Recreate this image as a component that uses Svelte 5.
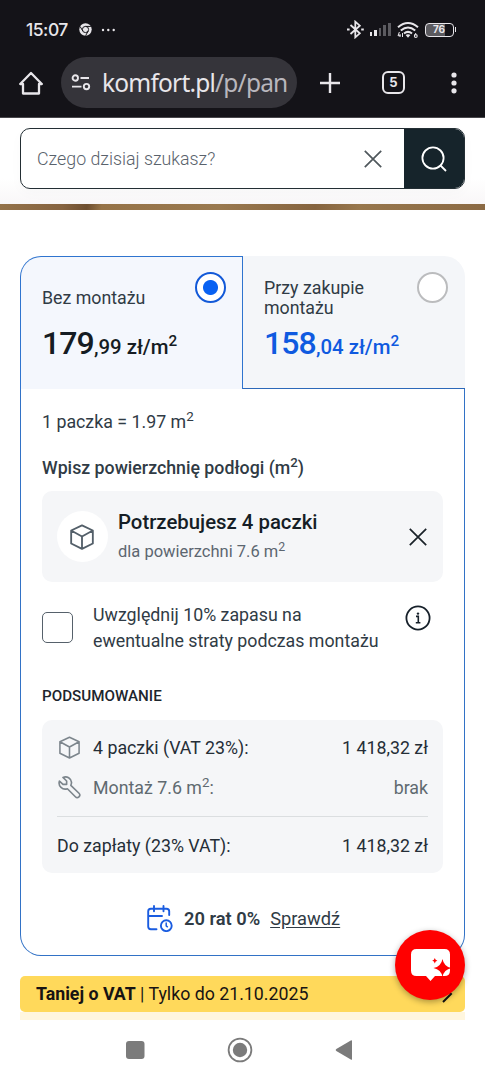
<script>
	const offers = [
		{ label: 'Bez montażu', whole: '179', rest: ',99 zł/m', active: true },
		{ label: 'Przy zakupie montażu', whole: '158', rest: ',04 zł/m', active: false }
	];
	const signal = [4, 6, 8, 11, 13];
</script>

{#snippet box(size)}
	<svg class="box-icon" width={size} height={size} viewBox="0 0 24 24">
		<path d="M12 1.3 22 6v12l-10 5L2 18V6z M2 6l10 5.5L22 6 M12 11.5V23" />
	</svg>
{/snippet}

{#snippet cross()}
	<svg class="cross" width="20" height="20" viewBox="0 0 20 20">
		<path d="M1.8 1.8 18.2 18.2M18.2 1.8 1.8 18.2" />
	</svg>
{/snippet}

<div class="screen">
	<header class="phone">
		<div class="status">
			<span class="clock">15:07</span>
			<svg class="chrome" width="13" height="13" viewBox="0 0 13 13">
				<circle cx="6.5" cy="6.5" r="6.2" fill="#e8e6ea" />
				<circle cx="6.5" cy="6.5" r="3.1" fill="#e8e6ea" stroke="#141318" stroke-width="1" />
				<path d="M6.5 3.4h5.4M3.8 8 1.1 3.5M9.2 8l-2.6 4.7" stroke="#141318" stroke-width="1" />
			</svg>
			<svg class="more" width="15" height="4" viewBox="0 0 15 4" fill="#e8e6ea">
				<circle cx="2" cy="2" r="1.2" /><circle cx="7.3" cy="2" r="1.2" /><circle cx="12.7" cy="2" r="1.2" />
			</svg>
			<div class="indicators">
				<svg width="17" height="19" viewBox="0 0 17 19" fill="none" stroke="#e8e6ea" stroke-width="1.8">
					<path d="m3.5 5 9.3 8.3-4.5 4V1.7l4.5 4L3.5 14" />
					<path d="M0 9.5h2.6M14.2 9.5h2.6" stroke-width="2.2" />
				</svg>
				<div class="signal">
					{#each signal as height, i}
						<i class:on={i < 2} style="height: {height}px"></i>
					{/each}
				</div>
				<svg class="wifi" width="22" height="18" viewBox="0 0 22 18" fill="none" stroke="#e8e6ea" stroke-width="2">
					<path d="M1 6.2Q11-2.2 21 6.2M3.8 9.5Q11 3.5 18.2 9.5M7 12.5q4-3.2 8 0" />
					<path d="m8.6 14 2.4 2.8 2.4-2.8q-2.4-1.6-4.8 0z" fill="#e8e6ea" stroke="none" />
					<path d="M2.4 11 1 14.7h2.6M3 13v3M5.5 16v-4M19 12q-1.6 2-1.6 3" stroke-width="1" />
					<circle cx="18.8" cy="15" r="1.4" stroke-width="1.1" />
				</svg>
				<div class="battery"><span>76</span></div>
			</div>
		</div>
		<div class="toolbar">
			<svg class="home" width="24" height="24" viewBox="0 0 24 24" fill="none" stroke="#e8e6ea" stroke-width="2.3" stroke-linejoin="round">
				<path d="M1.2 13 12 2l10.8 11H20v9.5H4V13z" />
			</svg>
			<div class="address">
				<svg width="20" height="17" viewBox="0 0 20 17" fill="none" stroke="#e8e6ea" stroke-width="1.9">
					<circle cx="4.3" cy="4" r="2.7" /><circle cx="15.5" cy="12.6" r="2.7" />
					<path d="M9.5 4H18M1 12.6h9.5" />
				</svg>
				<span>komfort.pl<em>/p/pan</em></span>
			</div>
			<svg class="plus" width="22" height="22" viewBox="0 0 22 22" stroke="#e8e6ea" stroke-width="2.4">
				<path d="M11 1v20M1 11h20" />
			</svg>
			<div class="tab-count">5</div>
			<svg class="kebab" width="6" height="22" viewBox="0 0 6 22" fill="#e8e6ea">
				<circle cx="3" cy="3" r="2.6" /><circle cx="3" cy="11" r="2.6" /><circle cx="3" cy="18.8" r="2.6" />
			</svg>
		</div>
	</header>

	<div class="search">
		<div class="search-field">
			<span>Czego dzisiaj szukasz?</span>
			{@render cross()}
			<button aria-label="Szukaj">
				<svg width="26" height="26" viewBox="0 0 26 26" fill="none" stroke="#fff" stroke-width="1.8">
					<circle cx="12" cy="12" r="10.6" /><path d="m19 19 6 6" />
				</svg>
			</button>
		</div>
	</div>
	<div class="floor"></div>

	<main>
		<section class="card">
			<div class="offers">
				{#each offers as offer}
					<div class="offer" class:active={offer.active}>
						<div class="offer-label">{offer.label}</div>
						<div class="price"><b>{offer.whole}</b>{offer.rest}<sup>2</sup></div>
						<span class="radio"></span>
					</div>
				{/each}
			</div>
			<div class="details">
				<div class="pack">1 paczka = 1.97 m<sup>2</sup></div>
				<div class="area-title">Wpisz powierzchnię podłogi (m<sup>2</sup>)</div>
				<div class="need">
					<div class="bubble">{@render box(26)}</div>
					<div class="need-text">
						<strong>Potrzebujesz 4 paczki</strong>
						<span>dla powierzchni 7.6 m<sup>2</sup></span>
					</div>
					{@render cross()}
				</div>
				<div class="reserve">
					<span class="checkbox"></span>
					<p>Uwzględnij 10% zapasu na<br />ewentualne straty podczas montażu</p>
					<svg width="26" height="26" viewBox="0 0 26 26" fill="none" stroke="#16202a" stroke-width="1.8">
						<circle cx="13" cy="13" r="11.6" />
						<path d="M11 11.4h2.3v6M10.8 17.7h4.6" stroke-width="1.6" />
						<circle cx="13" cy="8.6" r="1.2" fill="#16202a" stroke="none" />
					</svg>
				</div>
				<h2>PODSUMOWANIE</h2>
				<div class="summary">
					<div class="row">
						{@render box(23)}
						<span>4 paczki (VAT 23%):</span>
						<span class="amount">1 418,32 zł</span>
					</div>
					<div class="row muted">
						<svg width="23" height="23" viewBox="0 0 24 24" fill="none" stroke="#7c858c" stroke-width="1.7" stroke-linejoin="round">
							<path d="M11.1 1.8A6.3 6.3 0 0 0 5.2 1.5L9 5.2v3.6H5.2L1.5 5.3a6.4 6.4 0 0 0 8.3 8l8.3 8.4a2.6 2.6 0 0 0 3.8-3.7l-8.5-8.3a6.4 6.4 0 0 0-2.3-7.9z" />
						</svg>
						<span>Montaż 7.6 m<sup>2</sup>:</span>
						<span class="amount">brak</span>
					</div>
					<div class="row total">
						<span>Do zapłaty (23% VAT):</span>
						<span class="amount">1 418,32 zł</span>
					</div>
				</div>
				<div class="instalments">
					<svg width="26" height="27" viewBox="0 0 26 27" fill="none" stroke="#1a5ce0" stroke-width="1.9" stroke-linecap="round">
						<path d="M9.5 24.2H3.8Q1.2 24.2 1.2 21.5V6.3q0-2.6 2.6-2.6h15.7q2.7 0 2.7 2.6V10M1.2 11H15M7 1v5.3M16.5 1v5.3" />
						<circle cx="19.3" cy="20.7" r="5.4" />
						<path d="M19.2 18v2.8l1.2 1" stroke-width="1.5" />
					</svg>
					<b>20 rat 0%</b>
					<u>Sprawdź</u>
				</div>
			</div>
		</section>
		<div class="promo">
			<span><b>Taniej o VAT</b> | Tylko do 21.10.2025</span>
			<svg width="12" height="18" viewBox="0 0 12 18" fill="none" stroke="#111" stroke-width="2">
				<path d="m2 1 8 8-8 8" />
			</svg>
		</div>
		<div class="promo-next"></div>
	</main>

	<nav>
		<svg width="20" height="20" viewBox="0 0 20 20"><rect x="1" y="1" width="18.5" height="18" rx="3" fill="#7b7b7b" /></svg>
		<svg width="26" height="26" viewBox="0 0 26 26">
			<circle cx="13" cy="13" r="11.4" fill="none" stroke="#7b7b7b" stroke-width="1.8" />
			<circle cx="13" cy="13" r="7.2" fill="#7b7b7b" />
		</svg>
		<svg width="18" height="22" viewBox="0 0 18 22"><path d="M17 2v18q0 1.3-1.2.6L1.3 12q-1.3-1 0-2L15.8 1.4Q17 .7 17 2z" fill="#7b7b7b" /></svg>
	</nav>

	<button class="chat" aria-label="Czat">
		<svg width="42" height="34" viewBox="0 0 42 34">
			<path d="M6.5 1h28q5.5 0 5.5 5.5v16q0 5.5-5.5 5.5H25l-4.5 5-4.5-5H6.5Q1 28 1 22.5v-16Q1 1 6.5 1z" fill="#fff" />
			<path d="M32.5 11q1.3 7.5 9 9-7.7 1.5-9 9-1.3-7.5-9-9 7.7-1.5 9-9z" fill="#f00" />
			<path d="M24.8 10q.4 2.3 2.6 2.7-2.2.4-2.6 2.7-.4-2.3-2.6-2.7 2.2-.4 2.6-2.7z" fill="#f00" />
		</svg>
	</button>
</div>

<style>
	:global(body) {
		background: #fff;
	}

	.screen {
		position: relative;
		display: flex;
		flex-direction: column;
		width: 485px;
		height: 1080px;
		overflow: hidden;
		box-sizing: border-box;
		font-family: Roboto, 'Liberation Sans', sans-serif;
		font-size: 17.8px;
		color: #303b45;
		white-space: nowrap;
	}

	.screen :global(*) {
		box-sizing: border-box;
	}

	svg {
		display: block;
		flex: none;
	}

	button {
		padding: 0;
		border: 0;
	}

	sup {
		font-size: 75%;
		line-height: 0;
		vertical-align: 0.52em;
	}

	.phone {
		height: 118px;
		background: #141318;
		border-bottom: 1px solid #48474b;
		color: #e8e6ea;
	}

	.status {
		display: flex;
		align-items: center;
		height: 57px;
		padding: 2px 29.5px 0 26px;
	}

	.clock {
		width: 53px;
		font: 500 17.5px Inter, sans-serif;
		letter-spacing: -0.5px;
	}

	.more {
		margin-left: 9px;
	}

	.indicators {
		display: flex;
		align-items: center;
		margin-left: auto;
	}

	.signal {
		display: flex;
		align-items: flex-end;
		gap: 2px;
		height: 13px;
		margin: 0 6px;
	}

	.signal i {
		width: 2.6px;
		background: #5c5b60;
	}

	.signal i.on {
		background: #e8e6ea;
	}

	.battery {
		position: relative;
		width: 29px;
		height: 14px;
		margin: 0 2px 0 6px;
		border: 1.5px solid #e8e6ea;
		border-radius: 4px;
		background: linear-gradient(90deg, #5b5a5f 72%, #141318 72%);
		font: 700 10px/11px Inter, sans-serif;
		text-align: center;
	}

	.battery::after {
		content: '';
		position: absolute;
		right: -3.5px;
		top: 3px;
		width: 1.5px;
		height: 5px;
		background: #e8e6ea;
	}

	.toolbar {
		display: flex;
		align-items: center;
		height: 51px;
		padding: 0 28px 0 19px;
	}

	.address {
		display: flex;
		align-items: center;
		gap: 11px;
		width: 236px;
		height: 51px;
		margin-left: 18px;
		padding-left: 10px;
		border-radius: 26px;
		background: #35343a;
		font: 400 24.5px 'Noto Sans', sans-serif;
	}

	.address span {
		letter-spacing: -0.8px;
	}

	.address em {
		font-style: normal;
		color: #b9b7bd;
	}

	.plus {
		margin-left: 22px;
	}

	.tab-count {
		width: 23px;
		height: 23px;
		margin-left: 41px;
		border: 2.4px solid #e8e6ea;
		border-radius: 6px;
		font: 700 13px/18px Inter, sans-serif;
		text-align: center;
	}

	.kebab {
		margin-left: auto;
	}

	.search {
		height: 86px;
		padding: 10px 20px 0;
		background: linear-gradient(#fff 70%, #f9f7f8);
	}

	.search-field {
		display: flex;
		align-items: center;
		height: 61px;
		padding-left: 16px;
		border: 1.5px solid #232e34;
		border-radius: 10px;
		background: #fff;
		overflow: hidden;
		box-shadow: 0 4px 14px #00000006;
		font-weight: 300;
		color: #59626c;
	}

	.search-field button {
		display: flex;
		align-items: center;
		justify-content: center;
		width: 60px;
		height: 61px;
		background: #16242b;
	}

	.cross {
		margin-left: auto;
		fill: none;
		stroke: #1a2229;
		stroke-width: 1.7;
	}

	.search-field .cross {
		margin-right: 21px;
		stroke: #50585d;
	}

	.floor {
		height: 6px;
		background: linear-gradient(100deg, #94734a, #866340 13%, #6e4f30 18%, #967348 21%, #9a794f 45%, #86643f 65%, #98774d 74%, #8b6a44);
	}

	main {
		height: 810px;
		padding: 46px 20px 0;
	}

	.card {
		height: 700px;
		border-radius: 21px;
	}

	.offers {
		display: grid;
		grid-template-columns: 223px 222px;
		height: 133px;
	}

	.offer {
		position: relative;
		display: flex;
		flex-direction: column;
		padding: 20px 0 0 21px;
		border-bottom: 1px solid #2c68b9;
		border-top-right-radius: 21px;
		background: #f4f6f9;
	}

	.offer.active {
		padding: 19px 0 0 21px;
		border: 1px solid #2f74cf;
		border-bottom: 0;
		border-radius: 21px 0 0;
		background: #f4f7fd;
	}

	.offer-label {
		display: flex;
		align-items: center;
		width: 130px;
		height: 44px;
		white-space: normal;
		line-height: 20.5px;
	}

	.price {
		height: 46px;
		line-height: 47px;
		font-size: 20.4px;
		font-weight: 500;
		color: #0f5ae0;
	}

	.price b {
		font-size: 32px;
		font-weight: 500;
		letter-spacing: -0.9px;
	}

	.active .price {
		color: #151c23;
	}

	.radio {
		position: absolute;
		top: 16px;
		right: 17px;
		width: 31px;
		height: 31px;
		border: 2.5px solid #bbbcbe;
		border-radius: 50%;
		background: #fff;
	}

	.active .radio {
		top: 15px;
		right: 16px;
		border-color: #1259d8;
		background: radial-gradient(circle, #0861f2 7px, #fff 8px);
	}

	.details {
		height: 567px;
		padding: 20px 21px 0;
		border: 1px solid #3272c6;
		border-top: 0;
		border-radius: 0 0 21px 21px;
	}

	.pack {
		height: 26px;
		line-height: 26px;
	}

	.area-title {
		height: 56px;
		padding-top: 20px;
		line-height: 26px;
		font-size: 17.75px;
		font-weight: 500;
	}

	.need {
		display: flex;
		align-items: center;
		height: 91px;
		padding: 0 15px;
		border-radius: 10px;
		background: #f5f6f8;
	}

	.bubble {
		display: flex;
		align-items: center;
		justify-content: center;
		width: 51px;
		height: 51px;
		padding-right: 1px;
		border-radius: 50%;
		background: #fff;
	}

	.box-icon {
		fill: none;
		stroke: #7c858c;
		stroke-width: 1.6;
		stroke-linejoin: round;
	}

	.bubble .box-icon {
		stroke: #535f69;
		stroke-width: 1.7;
	}

	.need-text {
		display: flex;
		flex-direction: column;
		margin-left: 10px;
		line-height: 29px;
	}

	.need-text strong {
		padding-top: 1px;
		font-size: 20.35px;
		font-weight: 500;
		color: #161e26;
	}

	.need-text span {
		font-size: 16.5px;
		color: #5c6670;
	}

	.reserve {
		display: flex;
		align-items: flex-start;
		height: 106px;
		padding: 20px 12px 0 0;
	}

	.checkbox {
		width: 31px;
		height: 31px;
		margin-top: 10px;
		border: 1.5px solid #56616b;
		border-radius: 5px;
	}

	.reserve p {
		margin: 0 0 0 20px;
		line-height: 25.5px;
	}

	.reserve svg {
		margin: 3px 0 0 auto;
	}

	h2 {
		height: 32px;
		margin: 0;
		font-size: 15.2px;
		line-height: 17px;
		font-weight: 500;
		color: #1d252d;
	}

	.summary {
		height: 153px;
		padding: 7px 15px 0;
		border-radius: 10px;
		background: #f5f6f8;
		color: #252e37;
	}

	.row {
		display: flex;
		align-items: center;
		height: 41px;
		padding-left: 1px;
	}

	.row svg + span {
		margin-left: 12px;
	}

	.amount {
		margin-left: auto;
	}

	.row.muted {
		height: 39px;
		color: #606a70;
	}

	.row.total {
		height: 58px;
		margin-top: 9px;
		padding-left: 0;
		border-top: 1.5px solid #dbdee0;
	}

	.instalments {
		display: flex;
		align-items: center;
		height: 91px;
		padding-left: 105px;
		font-size: 18.3px;
	}

	.instalments b {
		margin: 0 10px 0 11px;
		font-weight: 600;
	}

	.instalments u {
		text-underline-offset: 2px;
	}

	.promo {
		display: flex;
		align-items: center;
		justify-content: space-between;
		height: 36px;
		margin-top: 20px;
		padding: 0 12px 1px 16px;
		border-radius: 5px;
		background: #ffd95b;
		font-size: 17.75px;
		color: #171313;
	}

	.promo-next {
		height: 8px;
		background: #fff6de;
	}

	nav {
		display: flex;
		align-items: center;
		height: 60px;
		padding-left: 125px;
		gap: 82px;
		background: #fff;
	}

	.chat {
		position: absolute;
		left: 395px;
		top: 930px;
		display: flex;
		align-items: center;
		justify-content: center;
		width: 70px;
		height: 70px;
		padding-left: 1px;
		border-radius: 50%;
		background: #f00;
		box-shadow: 0 2px 6px #0005;
	}
</style>
